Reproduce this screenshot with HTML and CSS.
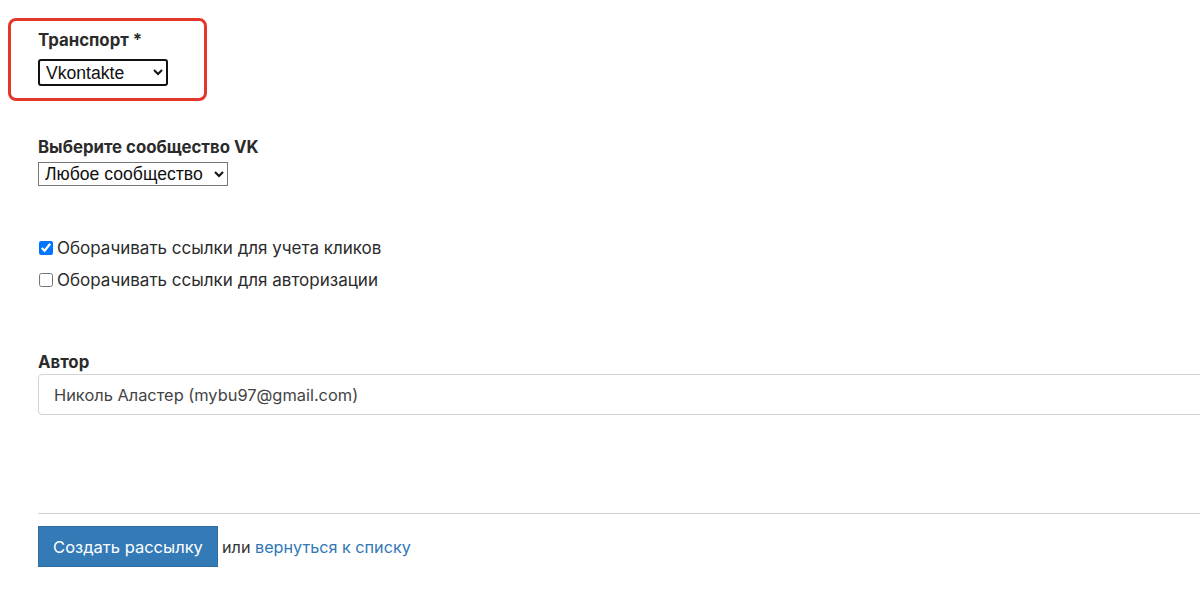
FILE: index.html
```html
<!DOCTYPE html>
<html lang="ru">
<head>
<meta charset="utf-8">
<title>Создать рассылку</title>
<link rel="stylesheet" href="styles.css">
</head>
<body>
<form class="page">
  <div class="field highlight">
    <label class="label" for="transport">Транспорт *</label>
    <select id="transport" class="select select-focus">
      <option>Vkontakte</option>
    </select>
  </div>

  <div class="field group-vk">
    <label class="label" for="community">Выберите сообщество VK</label>
    <select id="community" class="select select-plain">
      <option>Любое сообщество</option>
    </select>
  </div>

  <div class="checks">
    <label class="check"><input type="checkbox" checked> Оборачивать ссылки для учета кликов</label>
    <label class="check"><input type="checkbox"> Оборачивать ссылки для авторизации</label>
  </div>

  <div class="field author">
    <label class="label" for="author">Автор</label>
    <div class="input" id="author">Николь Аластер (mybu97@gmail.com)</div>
  </div>

  <div class="actions">
    <button type="button" class="btn">Создать рассылку</button>
    <span class="or">или <a href="#" class="link">вернуться к списку</a></span>
  </div>
</form>
</body>
</html>
```

FILE: styles.css
```css
html, body {
  margin: 0;
  padding: 0;
  background: #fff;
  overflow: hidden;
}
body {
  font-family: Inter, "Noto Sans", sans-serif;
  color: #333;
  font-size: 16px;
}
.page {
  width: 1220px;
  padding: 0 0 0 38px;
  display: flex;
  flex-direction: column;
  align-items: flex-start;
}
.field {
  display: flex;
  flex-direction: column;
  align-items: flex-start;
}
.label {
  font-weight: 700;
  font-size: 16.8px;
  line-height: 20px;
  color: #2b2b2b;
}
.highlight {
  margin: 18px 0 0 -30px;
  border: 3px solid #e3372c;
  border-radius: 8px;
  padding: 9px 0 0 27px;
  box-sizing: border-box;
  width: 199px;
  height: 83px;
}
.select {
  font-family: "Liberation Sans", Arial, sans-serif;
  color: #111;
  background: #fff;
  margin: 0;
}
.select-focus {
  margin-top: 9px;
  width: 130px;
  height: 27px;
  font-size: 17.6px;
  border: 2px solid #111;
  border-radius: 3px;
  padding: 0 2px;
}
.select-plain {
  margin-top: 5px;
  width: 190px;
  height: 24px;
  font-size: 17.6px;
  border: 1px solid #767676;
  border-radius: 0;
  padding: 0 2px;
}
.group-vk {
  margin-top: 36px;
}
.checks {
  margin-top: 52px;
  display: flex;
  flex-direction: column;
  gap: 12px;
}
.check {
  display: flex;
  align-items: center;
  font-size: 17px;
  line-height: 20px;
  color: #2b2b2b;
}
.check input {
  margin: 0 4px 0 1px;
  width: 14px;
  height: 14px;
}
.author {
  margin-top: 62px;
}
.input {
  margin-top: 2px;
  width: 1200px;
  height: 41px;
  box-sizing: border-box;
  border: 1px solid #d4d4d4;
  border-radius: 4px;
  padding: 0 15px;
  display: flex;
  align-items: center;
  font-size: 16.4px;
  color: #444;
}
.actions {
  margin-top: 98px;
  width: 1200px;
  border-top: 1px solid #d0d0d0;
  padding-top: 12px;
  display: flex;
  align-items: center;
  gap: 4px;
}
.btn {
  font-family: Inter, "Noto Sans", sans-serif;
  font-size: 16.5px;
  color: #fff;
  background: #337ab7;
  border: 1px solid #2e6da4;
  border-radius: 0;
  width: 180px;
  height: 41px;
  padding: 0;
}
.or {
  font-size: 16.2px;
  color: #333;
}
.link {
  color: #2f77b5;
  text-decoration: none;
}
```
